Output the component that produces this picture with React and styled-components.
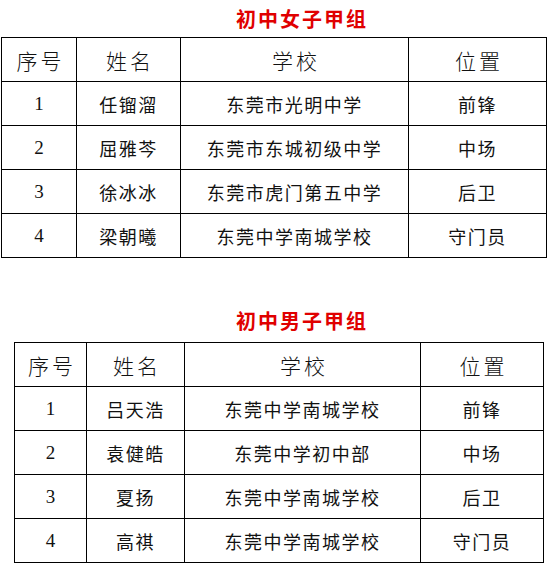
import React from "react";
import styled, { createGlobalStyle } from "styled-components";

const GlobalStyle = createGlobalStyle`
  html, body {
    margin: 0;
    padding: 0;
    background: #ffffff;
  }
  body {
    font-family: "Noto Sans CJK SC", "Noto Sans", sans-serif;
    color: #111111;
  }
`;

const Page = styled.div`
  width: 552px;
  display: flex;
  flex-direction: column;
`;

const Section = styled.section`
  display: flex;
  flex-direction: column;
  padding-left: ${(p) => p.$left}px;
  margin-top: ${(p) => p.$top}px;
`;

const Title = styled.h2`
  margin: 0;
  height: ${(p) => p.$h}px;
  line-height: ${(p) => p.$h}px;
  width: 552px;
  margin-left: -${(p) => p.$left}px;
  padding-left: 52px;
  box-sizing: border-box;
  text-align: center;
  font-family: "Noto Sans CJK SC", sans-serif;
  font-size: 20px;
  font-weight: 700;
  letter-spacing: 2px;
  color: #e00000;
`;

const Table = styled.table`
  border-collapse: collapse;
  table-layout: fixed;
  width: ${(p) => p.$w}px;
`;

const Col = styled.col`
  width: ${(p) => p.$w}px;
`;

const Row = styled.tr`
  height: 44px;
`;

const HeadCell = styled.th`
  border: 1px solid #000;
  padding: 0;
  text-align: center;
  font-family: "Noto Sans CJK SC", sans-serif;
  font-weight: 300;
  font-size: 21px;
  letter-spacing: 3px;
  text-indent: 3px;
  color: #111;
`;

const Cell = styled.td`
  border: 1px solid #000;
  padding: 0;
  text-align: center;
  font-family: ${(p) =>
    p.$num ? '"Liberation Serif", serif' : '"Noto Sans CJK SC", sans-serif'};
  font-size: ${(p) => (p.$num ? 19 : 18)}px;
  letter-spacing: ${(p) => (p.$num ? 0 : 1.5)}px;
  color: #111;
`;

const girls = [
  ["1", "任镏溜", "东莞市光明中学", "前锋"],
  ["2", "屈雅芩", "东莞市东城初级中学", "中场"],
  ["3", "徐冰冰", "东莞市虎门第五中学", "后卫"],
  ["4", "梁朝曦", "东莞中学南城学校", "守门员"],
];

const boys = [
  ["1", "吕天浩", "东莞中学南城学校", "前锋"],
  ["2", "袁健皓", "东莞中学初中部", "中场"],
  ["3", "夏扬", "东莞中学南城学校", "后卫"],
  ["4", "高祺", "东莞中学南城学校", "守门员"],
];

const headers = ["序号", "姓名", "学校", "位置"];

const Roster = ({ title, titleH, top, left, width, cols, rows }) => (
  <Section $top={top} $left={left}>
    <Title $h={titleH} $left={left}>
      {title}
    </Title>
    <Table $w={width}>
      <colgroup>
        {cols.map((w, i) => (
          <Col key={i} $w={w} />
        ))}
      </colgroup>
      <thead>
        <Row>
          {headers.map((h) => (
            <HeadCell key={h}>{h}</HeadCell>
          ))}
        </Row>
      </thead>
      <tbody>
        {rows.map((r) => (
          <Row key={r[0]}>
            {r.map((c, i) => (
              <Cell key={i} $num={i === 0}>
                {c}
              </Cell>
            ))}
          </Row>
        ))}
      </tbody>
    </Table>
  </Section>
);

export default function App() {
  return (
    <Page>
      <GlobalStyle />
      <Roster
        title="初中女子甲组"
        titleH={37}
        top={0}
        left={1}
        width={545}
        cols={[75, 104, 228, 138]}
        rows={girls}
      />
      <Roster
        title="初中男子甲组"
        titleH={42}
        top={42}
        left={14}
        width={529}
        cols={[72, 98, 236, 123]}
        rows={boys}
      />
    </Page>
  );
}
